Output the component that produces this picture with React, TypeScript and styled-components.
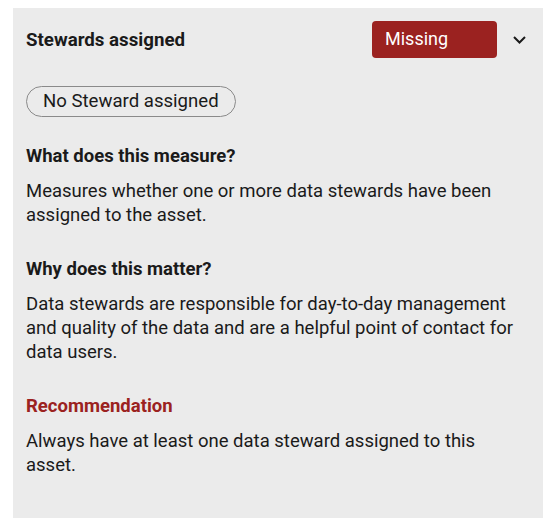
import React from "react";
import styled, { createGlobalStyle } from "styled-components";

const GlobalStyle = createGlobalStyle`
  body {
    margin: 0;
    background: #ffffff;
    font-family: Roboto, "Liberation Sans", sans-serif;
    color: #1a1a1a;
  }
`;

const Panel = styled.section`
  box-sizing: border-box;
  width: 530px;
  height: 510px;
  margin: 8px 0 0 13px;
  padding: 13px 17px 0 13px;
  background-color: #ebebeb;
`;

const Header = styled.div`
  display: flex;
  align-items: center;
  height: 37px;
`;

const Title = styled.h2`
  flex: 1;
  margin: 0;
  font-size: 18.7px;
  font-weight: 700;
  color: #1a1a1a;
`;

const StatusBadge = styled.span`
  box-sizing: border-box;
  width: 125px;
  height: 37px;
  padding-left: 13px;
  border-radius: 4px;
  background-color: #9b2220;
  color: #ffffff;
  font-size: 18px;
  line-height: 36px;
`;

const ToggleButton = styled.button`
  display: flex;
  align-items: center;
  justify-content: center;
  width: 13px;
  height: 37px;
  margin-left: 16px;
  padding: 0;
  border: none;
  background: none;
  cursor: pointer;
`;

const Pill = styled.span`
  display: inline-block;
  box-sizing: border-box;
  height: 31px;
  margin-top: 28px;
  padding: 0 16px;
  border: 1px solid #8a8a8a;
  border-radius: 16px;
  font-size: 18.6px;
  line-height: 29px;
  color: #1a1a1a;
`;

const Section = styled.div`
  margin-top: 27px;

  & + & {
    margin-top: 30px;
  }
`;

const Heading = styled.h3<{ accent?: boolean }>`
  margin: 0;
  font-size: 18.5px;
  font-weight: 700;
  line-height: 24px;
  color: ${(props) => (props.accent ? "#9b2220" : "#1a1a1a")};
`;

const Body = styled.p`
  margin: 11px 0 0;
  font-size: 18.5px;
  line-height: 24px;
  color: #1a1a1a;
`;

const sections = [
  {
    title: "What does this measure?",
    text: "Measures whether one or more data stewards have been assigned to the asset.",
  },
  {
    title: "Why does this matter?",
    text: "Data stewards are responsible for day-to-day management and quality of the data and are a helpful point of contact for data users.",
  },
  {
    title: "Recommendation",
    text: "Always have at least one data steward assigned to this asset.",
    accent: true,
  },
];

export default function App() {
  return (
    <>
      <GlobalStyle />
      <Panel>
        <Header>
          <Title>Stewards assigned</Title>
          <StatusBadge>Missing</StatusBadge>
          <ToggleButton aria-label="Collapse">
            <svg width="13" height="8" viewBox="0 0 13 8" fill="none">
              <path d="M1 1l5.5 5.5L12 1" stroke="#1a1a1a" strokeWidth="2" />
            </svg>
          </ToggleButton>
        </Header>
        <Pill>No Steward assigned</Pill>
        {sections.map((s) => (
          <Section key={s.title}>
            <Heading accent={s.accent}>{s.title}</Heading>
            <Body>{s.text}</Body>
          </Section>
        ))}
      </Panel>
    </>
  );
}
